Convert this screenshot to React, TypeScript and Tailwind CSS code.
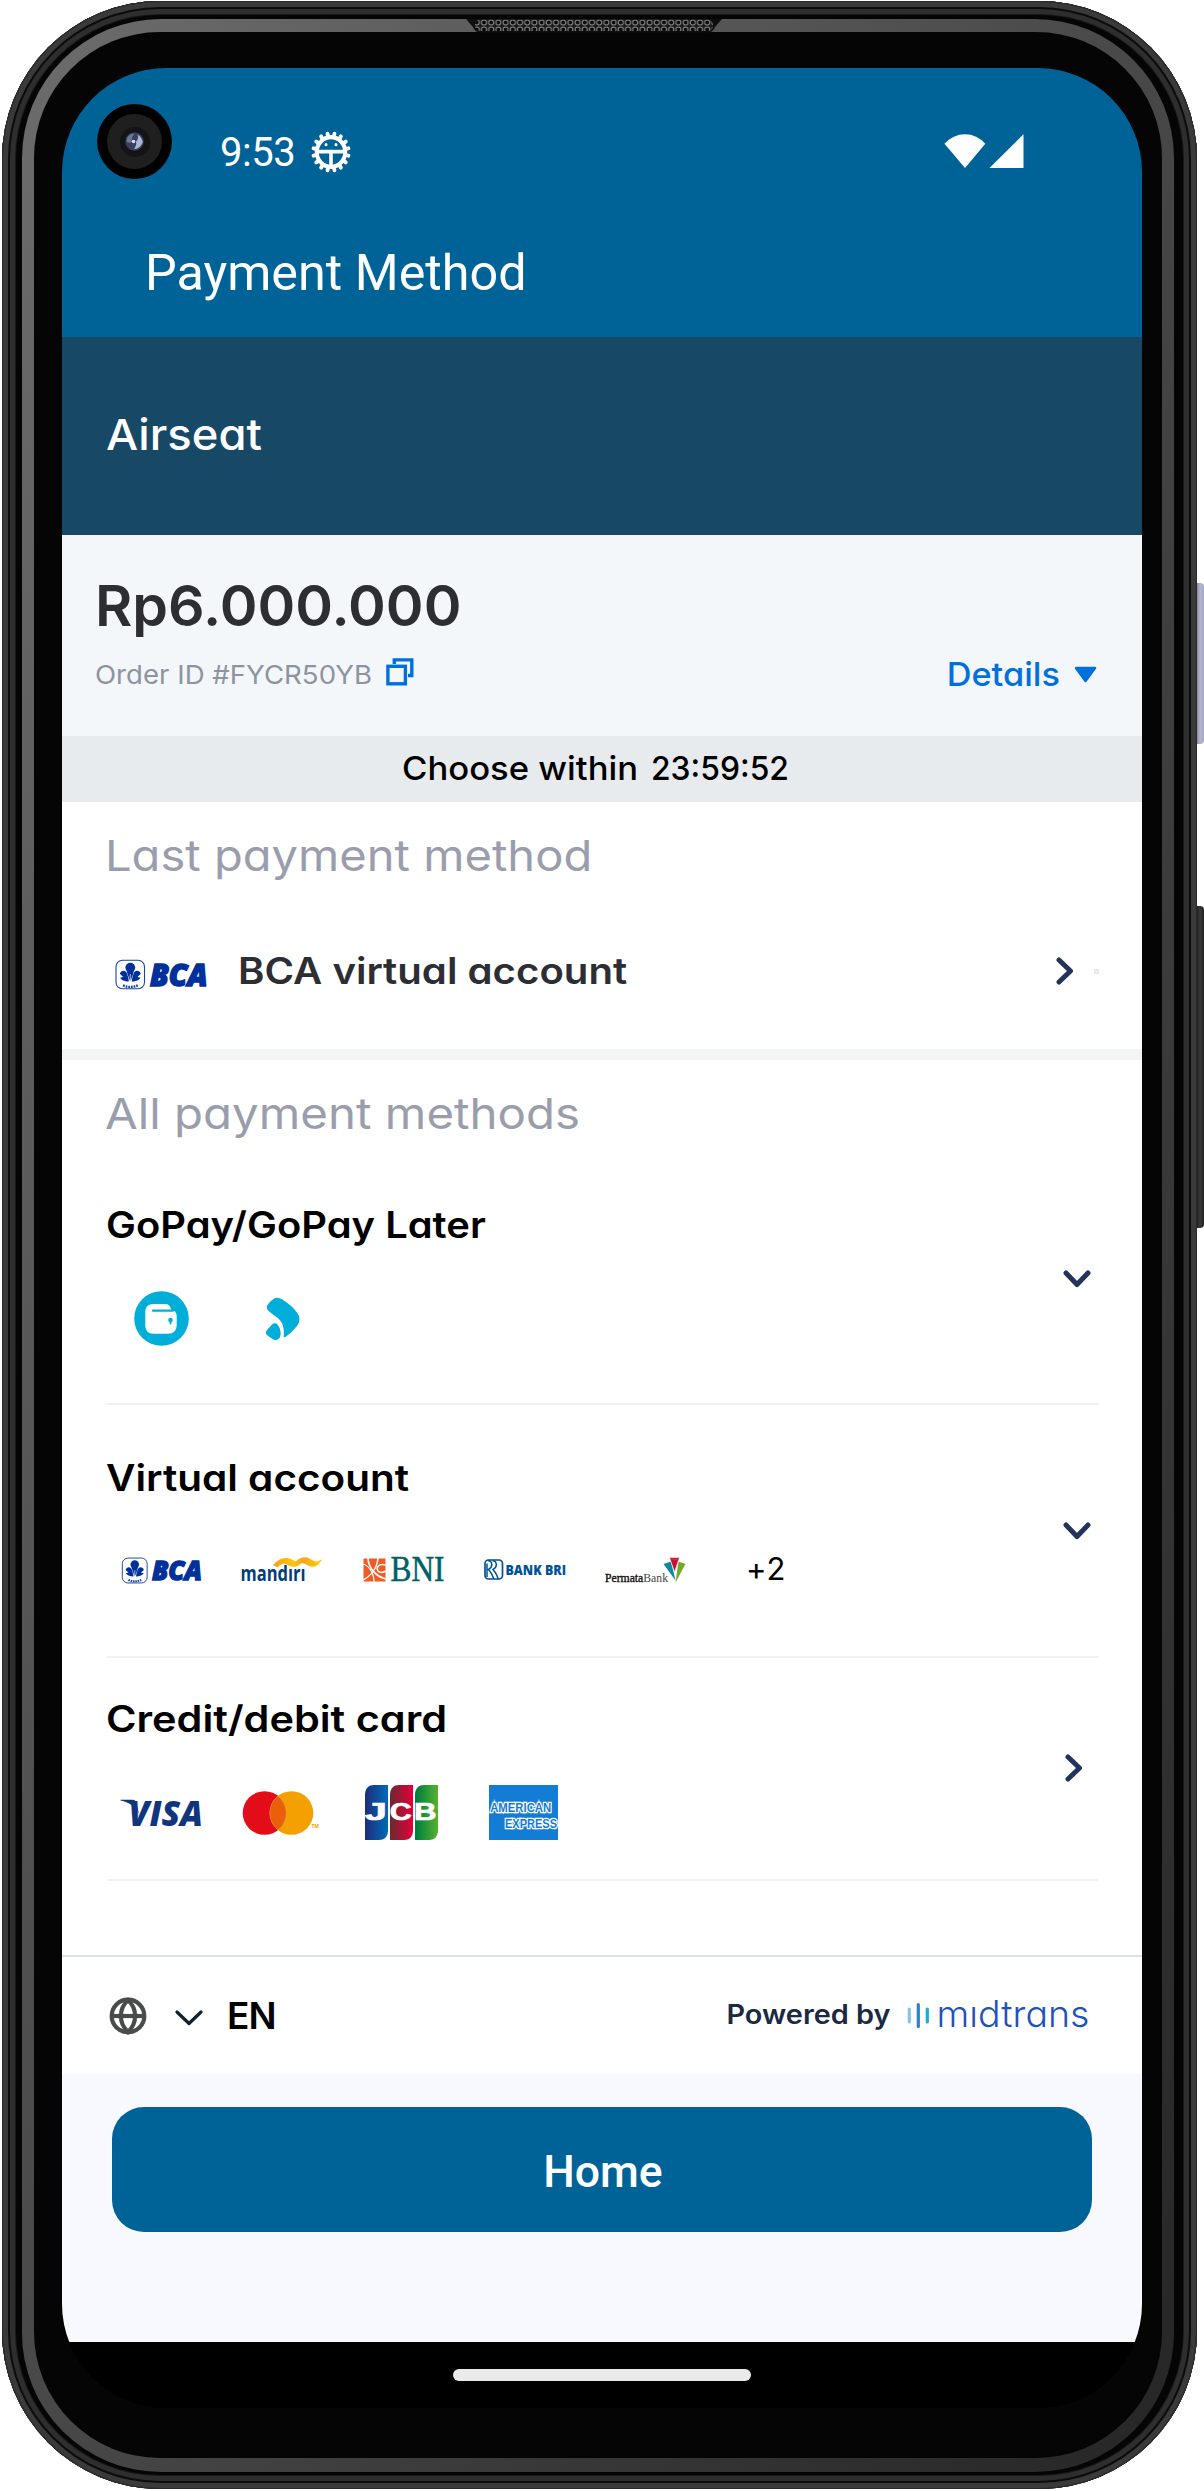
import type { ReactNode } from 'react';

const poppinsLike = "font-['Inter',sans-serif] [font-feature-settings:'cv11']";

function DebugIcon() {
  return (
    <svg width="40" height="42" viewBox="-20 -20 40 40" preserveAspectRatio="none" fill="none" stroke="#fff">
      <circle r="14.2" strokeWidth="4" />
      {Array.from({ length: 16 }, (_, i) => (
        <line key={i} x1="0" y1="-15" x2="0" y2="-17.8" strokeWidth="3.8" strokeLinecap="round" transform={`rotate(${i * 22.5 + 11.25})`} />
      ))}
      <path d="M-14 -0.4H14M0 0V14" strokeWidth="3.6" />
      <circle cx="-5" cy="-7" r="1.5" fill="#fff" stroke="none" />
      <circle cx="5" cy="-7" r="1.5" fill="#fff" stroke="none" />
    </svg>
  );
}

function Chevron({ dir, className = '' }: { dir: 'right' | 'down'; className?: string }) {
  return dir === 'right' ? (
    <svg className={className} width="18" height="28" viewBox="0 0 18 28" fill="none" stroke="#22345a" strokeWidth="5" strokeLinecap="round" strokeLinejoin="round">
      <path d="M3 3L14.5 14L3 25" />
    </svg>
  ) : (
    <svg className={className} width="28" height="18" viewBox="0 0 28 18" fill="none" stroke="#22345a" strokeWidth="5" strokeLinecap="round" strokeLinejoin="round">
      <path d="M3 3L14 14.5L25 3" />
    </svg>
  );
}

function BcaLogo({ className = '' }: { className?: string }) {
  return (
    <svg className={`overflow-visible ${className}`} viewBox="0 0 92 31" fill="#00309b">
      <rect x="1" y="1.2" width="28.5" height="28.6" rx="6.5" fill="none" stroke="#1a44a6" strokeWidth="1.1" />
      <circle cx="15.3" cy="8.6" r="4.9" />
      <path d="M15.3 22.5C13 17 12 14 11.6 10.5H19C18.6 14 17.6 17 15.3 22.5Z" />
      <path d="M4.8 14.8C6 10.5 11 10.8 12 14.5C12.8 17.5 13.8 19.5 13.8 22.5C9 22.5 6.5 21 5 18.8L8.2 17.9Z" />
      <path d="M25.8 14.8C24.6 10.5 19.6 10.8 18.6 14.5C17.8 17.5 16.8 19.5 16.8 22.5C21.6 22.5 24.1 21 25.6 18.8L22.4 17.9Z" />
      <path d="M15.3 15V27M7.5 25.5L23 25.5" stroke="#fff" strokeWidth="0.7" />
      <path d="M8 26.4Q15.3 29.5 22.8 26.4" fill="none" stroke="#1a44a6" strokeWidth="2.4" strokeDasharray="1.8 0.9" />
      <text x="35" y="26.6" fontFamily="'Open Sans', sans-serif" fontWeight="800" fontStyle="italic" fontSize="30.5" textLength="57.5" lengthAdjust="spacingAndGlyphs" stroke="#00309b" strokeWidth="1.5">BCA</text>
    </svg>
  );
}

function MandiriLogo() {
  return (
    <svg className="overflow-visible" width="81" height="26" viewBox="0 0 81 26">
      <defs>
        <linearGradient id="ribbon" x1="0" x2="1">
          <stop offset="0" stopColor="#f9a01b" />
          <stop offset="0.4" stopColor="#ffc20e" />
          <stop offset="0.6" stopColor="#f9a51b" />
          <stop offset="1" stopColor="#ffd400" />
        </linearGradient>
      </defs>
      <path d="M31 8Q38 0 45 1C49 1.5 51 3.5 53.5 4.5Q59 0 63.5 0.3C68 0.5 71 5 75 4.5L80.5 2Q76 9.5 71 9.8C66.5 10 63.5 5.5 59.5 6.2Q55 10 51 9.8C47 9.5 44.5 6 41 6.8Q37 8.5 35.5 10.5Z" fill="url(#ribbon)" />
      <text x="-1.5" y="24" fontFamily="'Open Sans', sans-serif" fontWeight="700" fontSize="20.5" textLength="65" lengthAdjust="spacingAndGlyphs" fill="#003d79">mandırı</text>
    </svg>
  );
}

function BniLogo() {
  return (
    <svg className="overflow-visible" width="82" height="24" viewBox="0 0 82 24">
      <rect x="0.5" y="0.5" width="22" height="23" fill="#f15a23" />
      <g fill="none" stroke="#fff">
        <path d="M0 22C6 19 14 12 15 0" strokeWidth="1.6" />
        <path d="M5 0C5 9 13 19 23 21" strokeWidth="1.6" />
        <path d="M0 6C5 7 11 14 11 24" strokeWidth="1.2" />
        <path d="M23 7C15 5 13 10 15 13C17 15.5 21 14 23 13" strokeWidth="1.4" />
      </g>
      <text x="27.5" y="23.2" fontFamily="'Liberation Serif', serif" fontSize="35" textLength="54" lengthAdjust="spacingAndGlyphs" fill="#006069" stroke="#006069" strokeWidth="0.5">BNI</text>
    </svg>
  );
}

function BriLogo() {
  return (
    <svg className="overflow-visible" width="83" height="22" viewBox="0 0 83 22">
      <rect x="1" y="1" width="17.5" height="19" rx="3.5" fill="none" stroke="#00529c" strokeWidth="1.7" />
      <path d="M4 1.5C9 2.5 9 8 4.5 10.5C6.5 13 9 16 9.5 20M8.5 1.5C13.5 2.5 13.5 8 9 10.5C11 13 13.5 16 14 20M3 4.5V18" fill="none" stroke="#00529c" strokeWidth="1.5" />
      <text x="21.5" y="15.8" fontFamily="'Open Sans', sans-serif" fontWeight="800" fontSize="14.8" textLength="60.5" lengthAdjust="spacingAndGlyphs" fill="#00529c">BANK BRI</text>
    </svg>
  );
}

function PermataLogo() {
  return (
    <svg className="overflow-visible" width="82" height="26" viewBox="0 0 82 26">
      <path d="M58.5 7L66 4.5L70.5 23.5Z" fill="#0f87a0" />
      <path d="M80.5 7L73.5 4.5L70.5 25.5Z" fill="#79a829" />
      <path d="M64.5 0.5H74.5L69.5 15Z" fill="#c8102e" stroke="#fff" strokeWidth="0.6" />
      <path d="M66 1L70 3L73 1" fill="none" stroke="#e4566a" strokeWidth="0.7" />
      <text x="0" y="25" fontFamily="'Liberation Serif', serif" fontSize="11.5" textLength="63" lengthAdjust="spacingAndGlyphs" fill="#111">
        <tspan stroke="#111" strokeWidth="0.35">Permata</tspan><tspan fill="#444">Bank</tspan>
      </text>
    </svg>
  );
}

function VisaLogo() {
  return (
    <svg className="overflow-visible" width="83" height="28" viewBox="0 0 83 28" fill="#10357f">
      <path d="M-0.5 0.8H11.500C14 0.8 15 2 15.5 4.5L18 15C14.5 8 9 3.5 -0.5 1.500Z" />
      <text x="7.5" y="26.5" fontFamily="'Open Sans', sans-serif" fontWeight="800" fontStyle="italic" fontSize="36" textLength="74.5" lengthAdjust="spacingAndGlyphs">VISA</text>
    </svg>
  );
}

function MastercardLogo() {
  return (
    <svg className="overflow-visible" width="78" height="44" viewBox="0 0 78 44">
      <circle cx="22.5" cy="22" r="21.8" fill="#e20d18" />
      <circle cx="49.5" cy="22" r="21.8" fill="#f4a000" />
      <path d="M36 4.9A21.8 21.8 0 0 1 36 39.1A21.8 21.8 0 0 1 36 4.9Z" fill="#ea5f0b" stroke="#f6a56a" strokeWidth="0.4" />
      <text x="69.5" y="37" fontFamily="'Open Sans', sans-serif" fontWeight="700" fontSize="5.5" textLength="7.5" lengthAdjust="spacingAndGlyphs" fill="#f4a000">TM</text>
    </svg>
  );
}

function JcbLogo() {
  const bars = [
    { x: 0, id: 'jb', from: '#1d2f7d', to: '#0069b4', letter: 'J', lx: -0.3, lw: 22 },
    { x: 25, id: 'jr', from: '#6f2830', to: '#e1003a', letter: 'C', lx: 24.8, lw: 22 },
    { x: 50, id: 'jg', from: '#007f3f', to: '#52ae30', letter: 'B', lx: 49, lw: 22.5 },
  ];
  return (
    <svg className="overflow-visible" width="73" height="55" viewBox="0 0 73 55">
      {bars.map((b) => (
        <g key={b.id}>
          <linearGradient id={b.id}>
            <stop offset="0.05" stopColor={b.from} />
            <stop offset="0.95" stopColor={b.to} />
          </linearGradient>
          <path d={`M${b.x} 10C${b.x} 3 ${b.x + 4} 0 ${b.x + 9} 0H${b.x + 23}V45C${b.x + 23} 52 ${b.x + 19} 55 ${b.x + 14} 55H${b.x}Z`} fill={`url(#${b.id})`} />
          <text x={b.lx} y="35.3" fontFamily="'Liberation Sans', sans-serif" fontWeight="700" fontSize="23.5" textLength={b.lw} lengthAdjust="spacingAndGlyphs" fill="#fff" stroke="#fff" strokeWidth="0.7">{b.letter}</text>
        </g>
      ))}
    </svg>
  );
}

function AmexLogo() {
  return (
    <svg className="overflow-visible" width="69" height="55" viewBox="0 0 69 55">
      <rect width="69" height="55" fill="#137cd4" />
      <g fontFamily="'Liberation Sans', sans-serif" fontWeight="700" fontSize="13" fill="#137cd4" stroke="#fff" strokeWidth="2.6" paintOrder="stroke">
        <text x="1.2" y="27" textLength="61" lengthAdjust="spacingAndGlyphs">AMERICAN</text>
        <text x="16" y="43" textLength="52" lengthAdjust="spacingAndGlyphs">EXPRESS</text>
      </g>
    </svg>
  );
}

function Slot({ children }: { children: ReactNode }) {
  return <div className="flex w-[121px] items-center">{children}</div>;
}

const groupTitle = 'flex w-fit origin-left items-center text-[36.5px] font-semibold text-black whitespace-nowrap';

export default function App() {
  return (
    <div className="relative h-[2491px] w-[1204px] bg-white pt-px pl-[2px]">
      {/* side buttons */}
      <div className="absolute top-[583px] left-[1196px] h-[161px] w-[8px] rounded-r-[4px] bg-linear-to-r from-[#7b7c93] via-[#b4b5cd] to-[#a6a7c2]" />
      <div className="absolute top-[906px] left-[1196px] h-[322px] w-[8px] rounded-r-[4px] bg-linear-to-r from-[#1a1a1a] via-[#3a3a3a] to-[#202020]" />

      {/* device body */}
      <div className="relative h-[2488px] w-[1195px] rounded-[158px] bg-[#050505] pt-[18px] pr-[23px] pb-[17px] pl-[20px] shadow-[inset_0_0_0_1px_#2a2a2a,inset_0_0_0_6px_#3a3a3a,inset_0_0_0_8px_#0c0c0c,inset_0_0_0_13px_#2e2e2e,inset_0_0_0_14px_#181818]">
        <div className="h-full w-full rounded-[139px] bg-linear-to-br from-[#6c6c6c] via-[#484848] to-[#262626] pt-[13px] pr-[12px] pb-[14px] pl-[12px]">
          <div className="h-full w-full rounded-[126px] bg-[#050505] pt-[36px] pl-[28px]">
            <div className={`flex h-[2340px] w-[1080px] flex-col overflow-hidden rounded-[104px] bg-black ${poppinsLike}`}>
              {/* status bar and app bar */}
              <header className="relative h-[269px] bg-[#006398] font-['Roboto',sans-serif] text-white">
                <div className="absolute top-[36px] left-[35px] flex size-[75px] items-center justify-center rounded-full bg-black">
                  <div className="flex size-[55px] items-center justify-center rounded-full bg-[#1f1f1f]">
                    <div className="flex size-[30px] items-center justify-center rounded-full bg-[#141416]">
                      <svg width="19" height="19" viewBox="0 0 19 19">
                        <circle cx="9.5" cy="9.5" r="9.3" fill="#39405a" />
                        <path d="M2.5 5Q6 1 9 2Q6 6 6.5 10Q3 12 1.5 9Z" fill="#6d7898" />
                        <path d="M12.5 2.5Q18 6 17.5 11Q14.5 17 9 17Q12 13 11 9.5Q14 7 12.5 2.5Z" fill="#a9b8d8" />
                        <circle cx="8.5" cy="9.5" r="1.8" fill="#d4dcf0" />
                      </svg>
                    </div>
                  </div>
                </div>
                <div className="flex h-[168px] items-center pr-[118px] pl-[158px]">
                  <span className="mt-[2px] w-[91px] text-[40px] tracking-[-0.5px]">9:53</span>
                  <DebugIcon />
                  <svg className="mb-[2px] ml-auto" width="80" height="36" viewBox="0 0 80 36" fill="#fff">
                    <path d="M0.5 10.8Q9 1.2 21 1.2T41.3 10.8L21 35Z" />
                    <path d="M45.5 35L79.5 1.2V35Z" />
                  </svg>
                </div>
                <h1 className="flex h-[74px] items-center pl-[83px] text-[50.3px]">Payment Method</h1>
              </header>

              <div className="flex h-[198px] items-center bg-[#174866] pb-[4px] pl-[44px] text-[43px] font-medium text-white">
                <span className="origin-left scale-x-[1.055]">Airseat</span>
              </div>

              {/* order summary */}
              <section className="h-[201px] bg-[#f3f7fa] pt-[36px]">
                <div className="ml-[33px] w-fit origin-left scale-x-[1.005] text-[57px] leading-[70px] font-semibold text-[#2d2e33]">Rp6.000.000</div>
                <div className="flex h-[67px] items-center pr-[45px] pl-[33px]">
                  <span className="w-[278px] origin-left scale-x-[1.062] text-[26px] whitespace-nowrap text-[#8f939f]">Order ID #FYCR50YB</span>
                  <svg className="mb-[5px] ml-[13px]" width="28" height="28" viewBox="0 0 28 28" fill="none" stroke="#0070dd" strokeWidth="3.4">
                    <rect x="1.9" y="8.3" width="17.5" height="17.5" />
                    <path d="M8.3 6V1.9H25.8V17.5H22" />
                  </svg>
                  <span className="ml-auto origin-right scale-x-[1.04] text-[33px] font-medium text-[#0070dd]">Details</span>
                  <svg className="ml-[14px]" width="23" height="17" viewBox="0 0 23 17" fill="#0070dd" stroke="#0070dd" strokeWidth="2.5" strokeLinejoin="round">
                    <path d="M2 2H21L11.5 15Z" />
                  </svg>
                </div>
              </section>

              <div className="flex h-[66px] items-center bg-[#e7ebee] pl-[340px] text-[33px] font-medium whitespace-nowrap text-black">
                <span className="w-[249px] origin-left scale-x-[1.05]">Choose within</span>
                <span className="origin-left scale-x-[0.965]">23:59:52</span>
              </div>

              {/* last used method */}
              <section className="h-[247px] bg-white">
                <h2 className="ml-[43px] flex h-[106px] w-fit origin-left scale-x-[1.095] items-center text-[43px] text-[#9a9eac]">Last payment method</h2>
                <div className="flex h-[126px] items-center pr-[43px] pl-[53px]">
                  <BcaLogo className="mt-[6px] h-[31px] w-[92px]" />
                  <span className="ml-[31px] origin-left scale-x-[1.1] text-[36.5px] font-semibold text-[#2d2e33]">BCA virtual account</span>
                  <Chevron dir="right" className="ml-auto" />
                  <span className="ml-[20px] size-[5px] border-2 border-[#e6eaf0]" />
                </div>
              </section>

              <div className="h-[11px] bg-[#f3f4f6]" />

              {/* all methods */}
              <section className="h-[895px] bg-white pr-[43px] pl-[45px]">
                <h2 className="-ml-[2px] flex h-[107px] w-fit origin-left scale-x-[1.103] items-center text-[43px] text-[#9a9eac]">All payment methods</h2>

                <div className="flex h-[238px] items-start justify-between border-b-2 border-[#f0f1f3]">
                  <div className="-ml-[1px]">
                    <div className={`${groupTitle} h-[117px] scale-x-[1.094]`}>GoPay/GoPay Later</div>
                    <div className="flex h-[69px] items-center pl-[28px]">
                      <svg width="55" height="55" viewBox="0 0 55 55">
                        <circle cx="27.5" cy="27.5" r="27.3" fill="#00aed9" />
                        <path d="M20 13H30.5C34.5 13 36.5 15 37 18.5C41 19.5 42.5 21.5 42.7 25V34C42.5 40 39.5 42.5 34 42.8H20C14 42.5 11.3 40 11.3 34V21.5C11.3 15.5 14 13.3 20 13Z" fill="#fff" />
                        <path d="M19 19.7H39" stroke="#00aed9" strokeWidth="2.2" strokeLinecap="round" />
                        <circle cx="36.5" cy="29" r="2.3" fill="#00aed9" />
                        <path d="M36.5 29V32.5" stroke="#00aed9" strokeWidth="1.8" strokeLinecap="round" />
                      </svg>
                      <svg className="ml-[76px]" width="36" height="44" viewBox="0 0 36 44" fill="#00aed9">
                        <path d="M8.5 2Q12 -0.8 17 2.2Q27 8.5 32 15.5Q37 22 32 29Q27 35.5 20.5 40Q18.5 41 18.7 38.5C19.5 28 17 23.5 8 17.5C3.5 14.5 1 12.5 2.2 8.5Q4.5 4.5 8.5 2Z" />
                        <path d="M7 27.5Q9 25.5 11.5 26.5C16 30.5 16.5 38 14.5 41Q12 44 8.5 42.5Q4.5 40.5 1.5 37.5Q0 35.5 2 33Z" />
                      </svg>
                    </div>
                  </div>
                  <Chevron dir="down" className="mt-[103px] mr-[8px]" />
                </div>

                <div className="flex h-[253px] items-start justify-between border-b-2 border-[#f0f1f3]">
                  <div className="-ml-[1px]">
                    <div className={`${groupTitle} h-[146px] scale-x-[1.11]`}>Virtual account</div>
                    <div className="flex h-[38px] items-center pl-[15px]">
                      <Slot><BcaLogo className="h-[27px] w-[81px]" /></Slot>
                      <Slot><MandiriLogo /></Slot>
                      <Slot><BniLogo /></Slot>
                      <Slot><BriLogo /></Slot>
                      <Slot><PermataLogo /></Slot>
                      <span className="mb-[2px] pl-[20px] text-[31px] tracking-[1px] text-black">+2</span>
                    </div>
                  </div>
                  <Chevron dir="down" className="mt-[117px] mr-[8px]" />
                </div>

                <div className="flex h-[223px] items-start justify-between border-b-2 border-[#f0f1f3]">
                  <div className="-ml-[1px]">
                    <div className={`${groupTitle} h-[123px] scale-x-[1.135]`}>Credit/debit card</div>
                    <div className="flex h-[63px] items-center pl-[15px]">
                      <Slot><VisaLogo /></Slot>
                      <Slot><MastercardLogo /></Slot>
                      <Slot><span className="ml-[2px]"><JcbLogo /></span></Slot>
                      <Slot><span className="ml-[5px]"><AmexLogo /></span></Slot>
                    </div>
                  </div>
                  <Chevron dir="right" className="mt-[96px] mr-[16px]" />
                </div>
              </section>

              {/* language and provider */}
              <div className="flex h-[119px] items-center border-t-2 border-[#dce0e9] bg-white pr-[52px] pl-[47px]">
                <svg width="38" height="38" viewBox="0 0 38 38" fill="none" stroke="#4a4c4b" strokeWidth="4.2">
                  <circle cx="19" cy="19" r="16.3" />
                  <path d="M4 19H34" />
                  <path d="M19 3C9.5 12 9.5 26 19 35C28.5 26 28.5 12 19 3Z" />
                </svg>
                <svg className="mt-[5px] ml-[28px]" width="28" height="16" viewBox="0 0 28 16" fill="none" stroke="#14202c" strokeWidth="3.2" strokeLinecap="round" strokeLinejoin="round">
                  <path d="M2 2L14 13.5L26 2" />
                </svg>
                <span className="ml-[24px] text-[37px] font-semibold tracking-[-0.8px] text-black">EN</span>
                <span className="mb-[2px] ml-auto origin-right scale-x-[1.09] text-[26.5px] font-semibold text-[#1b2942]">Powered by</span>
                <svg className="mb-[4px] ml-[17px] overflow-visible" width="182" height="32" viewBox="0 0 182 32">
                  <g strokeWidth="3.2" strokeLinecap="round">
                    <path d="M1.3 11V24" stroke="#84c6e8" />
                    <path d="M10.3 6.5V28.5" stroke="#2f80c8" />
                    <path d="M19.3 11V24" stroke="#0fb0dc" />
                  </g>
                  <text x="28.5" y="29" fontWeight="300" fontSize="37" textLength="153" lengthAdjust="spacingAndGlyphs" fill="#1f52bd">mıdtrans</text>
                </svg>
              </div>

              <div className="h-[268px] bg-[#f8f9fe] px-[50px] pt-[33px]">
                <button className="flex h-[125px] w-[980px] items-center justify-center rounded-[32px] bg-[#006398] pt-[5px] pl-[2px] font-['Roboto',sans-serif] text-[44.5px] font-medium text-white">Home</button>
              </div>

              {/* gesture bar */}
              <div className="flex h-[66px] items-center justify-center bg-black">
                <div className="h-[12px] w-[298px] rounded-full bg-[#eaeaea]" />
              </div>
            </div>
          </div>
        </div>
      </div>

      {/* earpiece grille */}
      <svg className="absolute top-[19px] left-[466px]" width="256" height="14" viewBox="0 0 256 14">
        <defs>
          <pattern id="mesh" width="7.2" height="7" patternUnits="userSpaceOnUse">
            <rect width="7.2" height="7" fill="#1c1c1c" />
            <circle cx="3.6" cy="3.5" r="2.5" fill="#0a0a0a" stroke="#8a8a8a" strokeWidth="1" />
          </pattern>
        </defs>
        <path d="M0 0H256L249 8Q247 13.5 241 13.5H15Q9 13.5 7 8Z" fill="#0e0e0e" />
        <rect x="9" y="0.5" width="238" height="11.5" rx="5.5" fill="url(#mesh)" />
      </svg>
    </div>
  );
}
